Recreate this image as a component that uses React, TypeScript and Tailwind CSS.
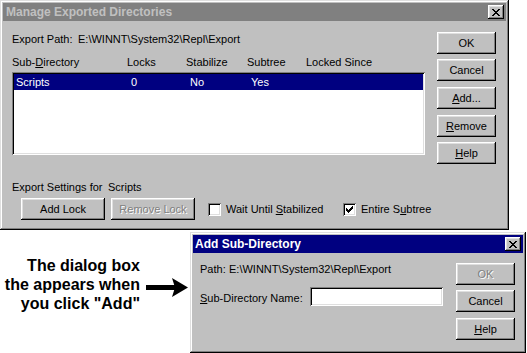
import React from 'react';

const raised =
  'shadow-[inset_-1px_-1px_0_#000,inset_1px_1px_0_#fff,inset_-2px_-2px_0_#808080,inset_2px_2px_0_#dfdfdf]';
const windowEdge =
  'shadow-[inset_-1px_-1px_0_#000,inset_1px_1px_0_#dfdfdf,inset_-2px_-2px_0_#808080,inset_2px_2px_0_#fff]';
const sunken =
  'shadow-[inset_1px_1px_0_#808080,inset_-1px_-1px_0_#fff,inset_2px_2px_0_#000,inset_-2px_-2px_0_#dfdfdf]';

function Btn({
  children,
  className = '',
  disabled = false,
}: {
  children: React.ReactNode;
  className?: string;
  disabled?: boolean;
}) {
  return (
    <div
      className={`flex h-[22px] shrink-0 items-center justify-center whitespace-nowrap bg-[#c0c0c0] ${raised} ${
        disabled ? 'text-[#808080] [text-shadow:1px_1px_0_#fff]' : 'text-black'
      } ${className}`}
    >
      {children}
    </div>
  );
}

function CloseBox() {
  return (
    <div className={`flex h-[14px] w-[16px] items-center justify-center bg-[#c0c0c0] ${raised}`}>
      <svg width="8" height="7" viewBox="0 0 8 7" shapeRendering="crispEdges">
        <polygon points="0,0 2,0 8,7 6,7" fill="#000" />
        <polygon points="6,0 8,0 2,7 0,7" fill="#000" />
      </svg>
    </div>
  );
}

function Check({ checked }: { checked?: boolean }) {
  return (
    <div className={`flex h-[13px] w-[13px] shrink-0 items-center justify-center bg-white ${sunken}`}>
      {checked && (
        <svg width="7" height="7" viewBox="0 0 7 7" shapeRendering="crispEdges">
          <path d="M0 2h1v1h1v1h1v-1h1v-1h1v-1h1v-1h1v3h-1v1h-1v1h-1v1h-1v1h-1v-1h-1v-1h-1z" fill="#000" />
        </svg>
      )}
    </div>
  );
}

export default function App() {
  return (
    <div className="h-[353px] w-[527px] overflow-hidden bg-white font-['Liberation_Sans',Arial,sans-serif] text-[11px] leading-[13px] text-black">
      {/* Manage Exported Directories */}
      <div className={`h-[230px] w-[509px] bg-[#c0c0c0] p-[3px] ${windowEdge}`}>
        <div className="flex h-[18px] items-center justify-between bg-[#808080] pl-[3px] pr-[2px]">
          <span className="text-[12px] font-bold text-[#c0c0c0]">Manage Exported Directories</span>
          <CloseBox />
        </div>
        <div className="flex pl-[9px]">
          <div className="w-[413px] shrink-0">
            <div className="mt-[12px] flex">
              <span className="w-[66px]">Export Path:</span>
              <span>E:\WINNT\System32\Repl\Export</span>
            </div>
            <div className="mt-[10px] grid grid-cols-[115px_59px_61px_59px_1fr]">
              <span>
                Sub-<span className="underline">D</span>irectory
              </span>
              <span>Locks</span>
              <span>Stabilize</span>
              <span>Subtree</span>
              <span>Locked Since</span>
            </div>
            <div className={`mt-[3px] h-[83px] bg-white p-[2px] ${sunken}`}>
              <div className="grid h-[16px] grid-cols-[115px_59px_61px_59px_1fr] items-center bg-[#000080] pl-[2px] text-white">
                <span>Scripts</span>
                <span>0</span>
                <span>No</span>
                <span>Yes</span>
                <span></span>
              </div>
            </div>
            <div className="mt-[26px] flex">
              <span className="w-[96px]">Export Settings for</span>
              <span>Scripts</span>
            </div>
            <div className="mt-[4px] flex items-center whitespace-nowrap pl-[9px]">
              <Btn className="w-[84px]">Add Lock</Btn>
              <Btn className="ml-[6px] w-[84px]" disabled>
                Remove Lock
              </Btn>
              <div className="ml-[13px] flex w-[135px] shrink-0 items-center">
                <Check />
                <span className="ml-[5px]">
                  Wait Until <span className="underline">S</span>tabilized
                </span>
              </div>
              <div className="flex shrink-0 items-center">
                <Check checked />
                <span className="ml-[5px]">
                  Entire S<span className="underline">u</span>btree
                </span>
              </div>
            </div>
          </div>
          <div className="ml-[12px] flex w-[59px] flex-col pt-[11px]">
            <Btn>OK</Btn>
            <Btn className="mt-[5px]">Cancel</Btn>
            <Btn className="mt-[6px]">
              <span>
                <span className="underline">A</span>dd...
              </span>
            </Btn>
            <Btn className="mt-[6px]">
              <span>
                <span className="underline">R</span>emove
              </span>
            </Btn>
            <Btn className="mt-[5px]">
              <span>
                <span className="underline">H</span>elp
              </span>
            </Btn>
          </div>
        </div>
      </div>

      {/* caption + Add Sub-Directory */}
      <div className="mt-[2px] flex">
        <div className="flex w-[190px]">
          <div className="w-[140px] pt-[24px] text-right text-[16px] font-bold leading-[19px]">
            <div>The dialog box</div>
            <div>the appears when</div>
            <div>you click "Add"</div>
          </div>
          <svg className="ml-[6px] mt-[46px]" width="42" height="19" viewBox="0 0 42 19">
            <rect x="0" y="7" width="30" height="5" fill="#000" />
            <polygon points="26,0 42,9.5 26,19 29,9.5" fill="#000" />
          </svg>
        </div>
        <div className={`h-[121px] w-[336px] bg-[#c0c0c0] p-[3px] ${windowEdge}`}>
          <div className="flex h-[18px] items-center justify-between bg-[#000080] pl-[2px] pr-[2px]">
            <span className="text-[12px] font-bold text-white">Add Sub-Directory</span>
            <CloseBox />
          </div>
          <div className="flex">
            <div className="flex-1 pl-[7px]">
              <div className="mt-[10px] flex">
                <span className="w-[29px]">Path:</span>
                <span>E:\WINNT\System32\Repl\Export</span>
              </div>
              <div className="mt-[11px] flex items-center">
                <span className="mt-[4px] w-[110px]">
                  <span className="underline">S</span>ub-Directory Name:
                </span>
                <div className={`h-[19px] w-[133px] bg-white ${sunken}`} />
              </div>
            </div>
            <div className="mr-[8px] mt-[10px] flex w-[59px] flex-col">
              <Btn disabled>OK</Btn>
              <Btn className="mt-[5px]">Cancel</Btn>
              <Btn className="mt-[6px]">
                <span>
                  <span className="underline">H</span>elp
                </span>
              </Btn>
            </div>
          </div>
        </div>
      </div>
    </div>
  );
}
